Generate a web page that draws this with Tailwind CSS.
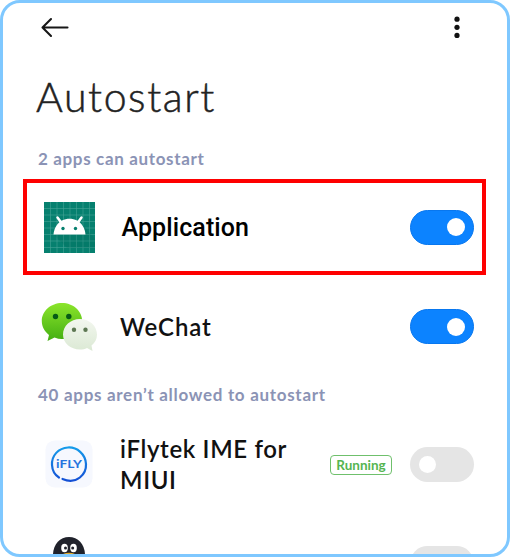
<!DOCTYPE html>
<html lang="en">
<head>
<meta charset="utf-8">
<title>Autostart</title>
<script src="https://cdn.jsdelivr.net/npm/@tailwindcss/browser@4"></script>
</head>
<body class="bg-white">
<main class="w-[510px] h-[557px] border-[3px] border-[#7fc8ff] rounded-[20px] bg-white overflow-hidden font-['Lato',sans-serif] text-[#111]">
  <header class="h-[66px] flex justify-between pl-[37px] pr-[46.5px] pt-[12px]">
    <svg class="w-[30px] h-[24px]" viewBox="0 0 30 24" fill="none" stroke="#171717" stroke-width="2.1" stroke-linecap="round" stroke-linejoin="round"><path d="M27.500 12.500H2.500M11 4L2.500 12.500L11 21"/></svg>
    <svg class="w-[8px] h-[26px]" viewBox="0 0 8 26" fill="#111"><circle cx="4" cy="4.200" r="2.600"/><circle cx="4" cy="12.300" r="2.600"/><circle cx="4" cy="20.400" r="2.600"/></svg>
  </header>
  <h1 class="h-[74px] pl-[33px] text-[41px] leading-[56px] font-light tracking-[1.6px] text-[#222] [-webkit-text-stroke:0.5px_#222] whitespace-nowrap">Autostart</h1>
  <h2 class="h-[36px] pl-[35px] text-[17px] leading-[31px] font-bold tracking-[0.65px] text-[#8b93b5] whitespace-nowrap">2 apps can autostart</h2>

  <section class="ml-[19.5px] w-[463.5px] h-[96px] border-4 border-[#fe0000] flex items-center pl-[17px] pr-[8px]">
    <svg class="w-[51px] h-[51px] shrink-0" viewBox="0 0 51 51">
      <rect width="51" height="51" fill="#07806f"/>
      <path d="M6.500 0V51M13 0V51M19.500 0V51M26 0V51M32.500 0V51M39 0V51M45.500 0V51M0 6.500H51M0 13H51M0 19.500H51M0 26H51M0 32.500H51M0 39H51M0 45.500H51" stroke="#5bb0a2" stroke-width=".6" opacity=".75"/>
      <path d="M10 33L23 46H51V37L39 23Z" fill="#006454" opacity=".2"/>
      <path d="M9.500 32.500C10 26 13.500 21 18 18.500C22.500 16 28.500 16 33 18.500C37.500 21 41 26 41.500 32.500Z" fill="#fff"/>
      <path d="M13.500 15.500L17.500 21M37.500 15.500L33.500 21" stroke="#fff" stroke-width="2.500" stroke-linecap="round"/>
      <circle cx="19" cy="26.500" r="1.700" fill="#07806f"/><circle cx="31.500" cy="26.500" r="1.700" fill="#07806f"/>
    </svg>
    <span class="ml-[27px] pt-[2px] flex-1 font-['Roboto',sans-serif] text-[25px] leading-[30px] font-medium tracking-[0.1px] text-black whitespace-nowrap">Application</span>
    <span class="w-[64px] h-[35px] rounded-full bg-[#0c83ff] border border-[#0877ef] flex items-center justify-end pr-[8px]"><i class="w-[18px] h-[18px] rounded-full bg-white"></i></span>
  </section>

  <section class="h-[103px] flex items-center pl-[38px] pr-[33px]">
    <svg class="w-[56px] h-[50px] shrink-0" viewBox="0 0 56 50">
      <defs><linearGradient id="wg" x2="0" y2="1"><stop stop-color="#8be52b"/><stop offset="1" stop-color="#43ae12"/></linearGradient><linearGradient id="ww" x2="0" y2="1"><stop stop-color="#f3f7ef"/><stop offset="1" stop-color="#dbe9d4"/></linearGradient></defs>
      <path d="M21 1C9.800 1 .8 9 .8 19C.8 24.500 3.500 29.500 8 33L6.500 39L13.500 35.500C16 36.500 18.500 37 21 37C32.200 37 41.200 29 41.200 19S32.200 1 21 1Z" fill="url(#wg)"/>
      <path d="M39 17C29.500 17 22 24 22 32.500S29.500 47.500 39 47.500C41.500 47.500 44 47 46 46L51.500 49L50.500 43.500C54 41 56 37 56 32.500C56 24 48.500 17 39 17Z" fill="url(#ww)"/>
      <g fill="#075b16"><circle cx="14.500" cy="14.500" r="2.700"/><circle cx="27.800" cy="14.500" r="2.700"/></g>
      <g fill="#5d7752"><circle cx="33" cy="27.800" r="2.200"/><circle cx="44.500" cy="27.800" r="2.200"/></g>
    </svg>
    <span class="ml-[23px] flex-1 text-[24px] leading-[30px] font-semibold tracking-[0.9px] whitespace-nowrap">WeChat</span>
    <span class="w-[64px] h-[35px] rounded-full bg-[#0c83ff] border border-[#0877ef] flex items-center justify-end pr-[8px]"><i class="w-[18px] h-[18px] rounded-full bg-white"></i></span>
  </section>
  <h2 class="h-[52px] pl-[35px] pt-[1px] text-[17px] leading-[32px] font-bold tracking-[0.7px] text-[#8b93b5] whitespace-nowrap">40 apps aren’t allowed to autostart</h2>

  <section class="h-[68px] flex items-center pl-[42px] pr-[33px]">
    <svg class="w-[48px] h-[48px] shrink-0" viewBox="0 0 48 48">
      <defs><linearGradient id="fi" x2="0" y2="1"><stop stop-color="#159bea"/><stop offset="1" stop-color="#1450d5"/></linearGradient></defs>
      <rect x=".5" y=".5" width="47" height="47" rx="9" fill="#f6f8fe"/>
      <path d="M17.500 39C32 45 41.500 34 41 24C40.500 14 32 7 23 7.500C13.500 8 6.500 15.500 7 25C7.300 30.500 10 35 14 37.500" fill="none" stroke="url(#fi)" stroke-width="2.200" stroke-linecap="round"/>
      <text x="11" y="28" textLength="26" lengthAdjust="spacingAndGlyphs" font-family="Lato,sans-serif" font-weight="bold" font-size="11" fill="#2474df">iFLY</text>
    </svg>
    <span class="ml-[27px] flex-1 text-[24px] leading-[31px] font-semibold tracking-[0.65px] whitespace-nowrap">iFlytek IME for<br>MIUI</span>
    <span class="w-[62px] h-[20px] mr-[18px] mt-[2px] rounded-[4px] border-[1.5px] border-[#6fc06c] flex items-center justify-center text-[13.5px] leading-[16px] font-bold text-[#55b551]">Running</span>
    <span class="w-[64px] h-[35px] rounded-full bg-[#e5e5e5] flex items-center pl-[9px]"><i class="w-[17px] h-[17px] rounded-full bg-white"></i></span>
  </section>

  <section class="h-[56px] flex items-end justify-between pl-[50px] pr-[33px]">
    <svg class="w-[32px] h-[17px]" viewBox="0 0 32 17"><path d="M0 17C.5 7 7 0 16 0S31.500 7 32 17Z" fill="#20222b"/><g fill="#fff"><ellipse cx="11.500" cy="11" rx="3.300" ry="4.200"/><ellipse cx="20.500" cy="11" rx="3.300" ry="4.200"/></g><circle cx="12.500" cy="11" r="1.500" fill="#20222b"/><circle cx="19.700" cy="11" r="1.500" fill="#20222b"/><path d="M10 17Q16 14.500 22 17Z" fill="#e5ad2d"/></svg>
    <span class="h-[8px] overflow-hidden"><span class="block w-[64px] h-[35px] rounded-full bg-[#e5e5e5]"></span></span>
  </section>
</main>
</body>
</html>
